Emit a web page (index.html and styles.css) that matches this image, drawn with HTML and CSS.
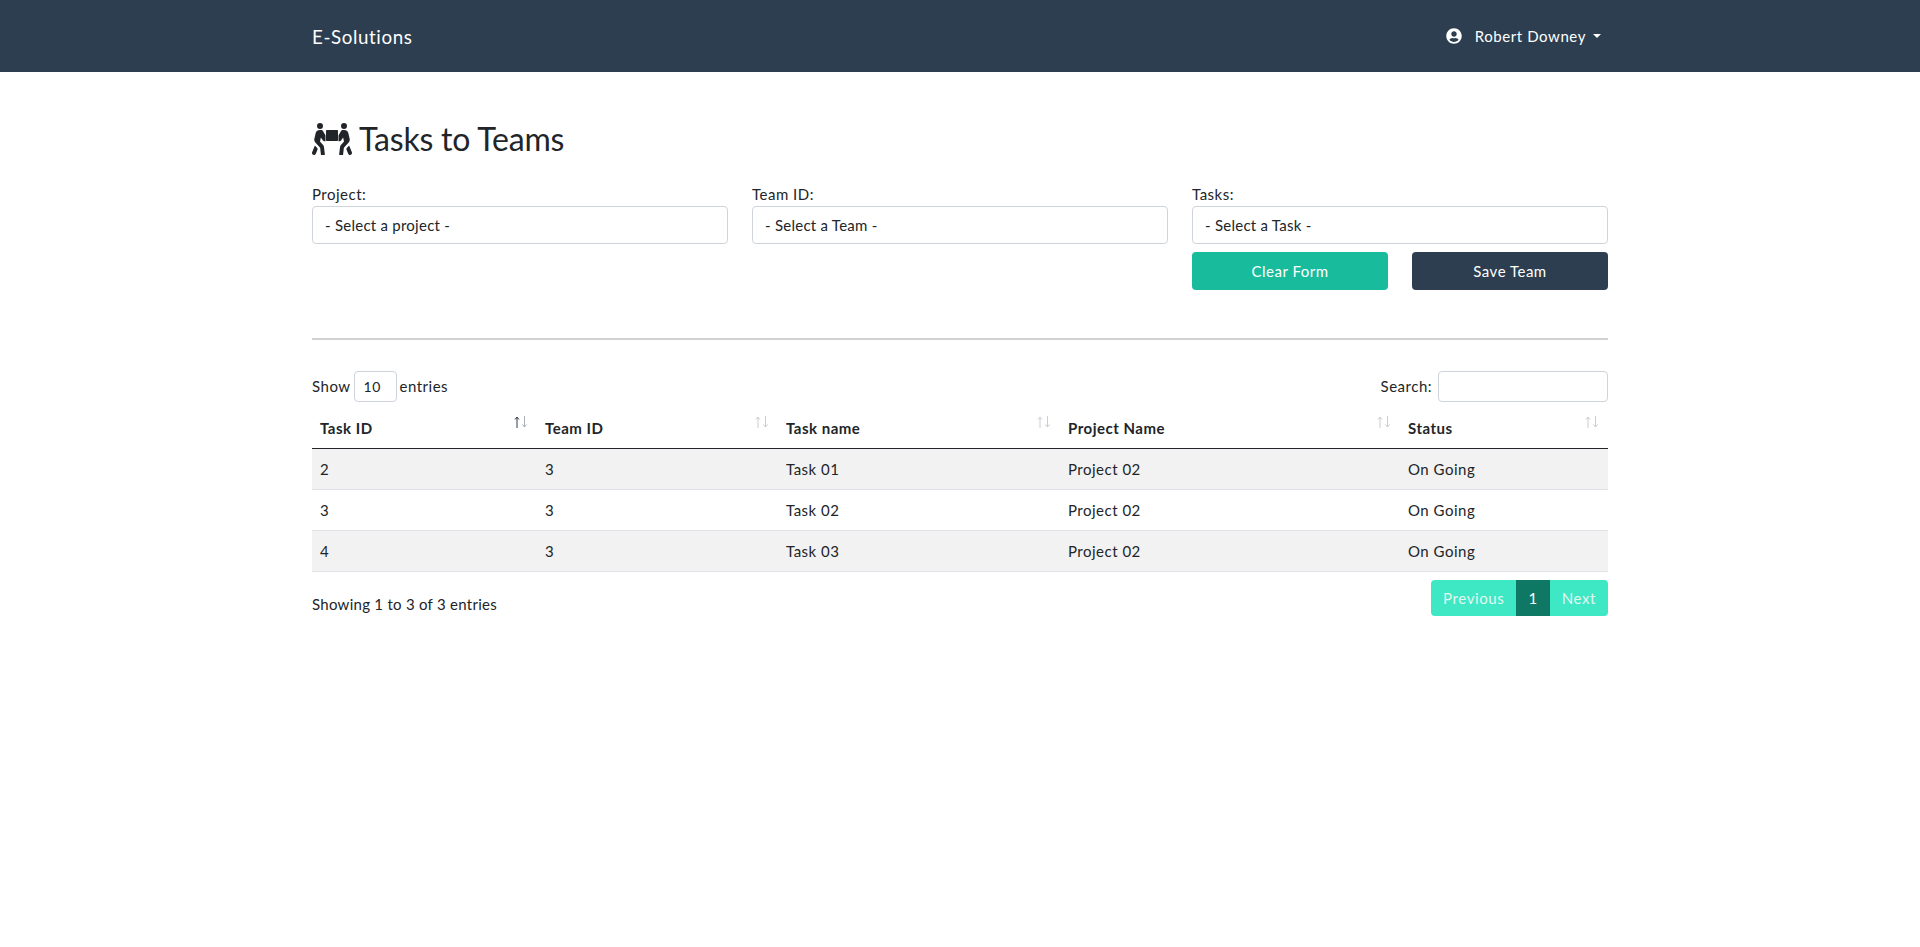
FILE: index.html
```html
<!DOCTYPE html>
<html lang="en">
<head>
<meta charset="utf-8">
<title>Tasks to Teams</title>
<link rel="stylesheet" href="styles.css">
</head>
<body>
<svg class="sprite" width="0" height="0">
  <symbol id="arrows" viewBox="0 0 14 12">
    <path class="up" d="M3 12V1M1 3.500 3 1l2 2.500"/>
    <path class="down" d="M10.500 0v11M8.500 8.500l2 2.500 2-2.500"/>
  </symbol>
</svg>
<nav class="navbar">
  <div class="container nav-inner">
    <a class="brand" href="#">E-Solutions</a>
    <a class="user" href="#">
      <svg class="user-icon" viewBox="0 0 496 512"><path fill="currentColor" d="M248 8C111 8 0 119 0 256s111 248 248 248 248-111 248-248S385 8 248 8zm0 96c48.600 0 88 39.400 88 88s-39.400 88-88 88-88-39.400-88-88 39.400-88 88-88zm0 344c-58.700 0-111.300-26.600-146.500-68.200 18.800-35.400 55.600-59.800 98.500-59.800 2.400 0 4.800.4 7.100 1.100 13 4.200 26.600 6.900 40.900 6.900 14.300 0 28-2.700 40.900-6.900 2.300-.7 4.700-1.100 7.100-1.100 42.900 0 79.700 24.400 98.500 59.800C359.300 421.400 306.700 448 248 448z"/></svg>
      <span>Robert Downey</span><i class="caret"></i>
    </a>
  </div>
</nav>
<main class="container">
  <h1 class="title">
    <svg class="carry-icon" viewBox="0 0 640 512">
      <g fill="currentColor">
        <circle cx="128" cy="48" r="48"/>
        <circle cx="512" cy="48" r="48"/>
        <rect x="224" y="112" width="192" height="176" rx="12"/>
        <path d="M96 112h48c14 0 26 8 34 20l38 66v92h-16c-12 0-22-6-28-14l-30-44-14 62 52 60c6 7 10 15 11 24l14 118c2 18-14 32-32 32-16 0-29-12-31-28l-12-104-80-90c-12-14-17-32-13-50l22-98c7-30 35-46 65-46z"/>
        <path d="M544 112h-48c-14 0-26 8-34 20l-38 66v92h16c12 0 22-6 28-14l30-44 14 62-52 60c-6 7-10 15-11 24l-14 118c-2 18 14 32 32 32 16 0 29-12 31-28l12-104 80-90c12-14 17-32 13-50l-22-98c-7-30-35-46-65-46z"/>
        <path d="M2 468l44-110 41 46 2 18-28 69c-6 15-24 24-40 18-16-7-25-25-19-41z"/>
        <path d="M638 468l-44-110-41 46-2 18 28 69c6 15 24 24 40 18 16-7 25-25 19-41z"/>
      </g>
    </svg>
    <span>Tasks to Teams</span>
  </h1>

  <form class="form-grid">
    <div class="field">
      <label>Project:</label>
      <select class="control"><option>- Select a project -</option></select>
    </div>
    <div class="field">
      <label>Team ID:</label>
      <select class="control"><option>- Select a Team -</option></select>
    </div>
    <div class="field">
      <label>Tasks:</label>
      <select class="control"><option>- Select a Task -</option></select>
      <div class="actions">
        <button type="button" class="btn btn-clear">Clear Form</button>
        <button type="button" class="btn btn-save">Save Team</button>
      </div>
    </div>
  </form>

  <hr class="divider">

  <div class="dt-top">
    <div class="dt-length">Show <span class="len-box">10</span> entries</div>
    <div class="dt-search"><label>Search:</label><input class="search-input" type="search"></div>
  </div>

  <table class="dt">
    <thead>
      <tr>
        <th class="c1"><span>Task ID</span><svg class="sort sorted"><use href="#arrows"/></svg></th>
        <th class="c2"><span>Team ID</span><svg class="sort"><use href="#arrows"/></svg></th>
        <th class="c3"><span>Task name</span><svg class="sort"><use href="#arrows"/></svg></th>
        <th class="c4"><span>Project Name</span><svg class="sort"><use href="#arrows"/></svg></th>
        <th class="c5"><span>Status</span><svg class="sort"><use href="#arrows"/></svg></th>
      </tr>
    </thead>
    <tbody>
      <tr class="odd"><td>2</td><td>3</td><td>Task 01</td><td>Project 02</td><td>On Going</td></tr>
      <tr><td>3</td><td>3</td><td>Task 02</td><td>Project 02</td><td>On Going</td></tr>
      <tr class="odd"><td>4</td><td>3</td><td>Task 03</td><td>Project 02</td><td>On Going</td></tr>
    </tbody>
  </table>

  <div class="dt-bottom">
    <div class="dt-info">Showing 1 to 3 of 3 entries</div>
    <ul class="pager">
      <li class="page">Previous</li>
      <li class="page active">1</li>
      <li class="page">Next</li>
    </ul>
  </div>
</main>
</body>
</html>
```
FILE: styles.css
```css
* { box-sizing: border-box; }
html, body { margin: 0; padding: 0; }
body {
  font-family: Lato, "Liberation Sans", sans-serif;
  font-size: 15px;
  line-height: 1.5;
  letter-spacing: .5px;
  color: #212529;
  background: #fff;
}
.sprite { display: block; height: 0; }
.container { width: 1320px; margin: 0 auto; padding: 0 12px; }
.navbar { background: #2c3e50; height: 72px; }
.nav-inner { display: flex; align-items: center; justify-content: space-between; height: 72px; }
.brand { color: #fff; font-size: 18.75px; line-height: 28px; padding-top: 2px; text-decoration: none; letter-spacing: .6px; }
.user { display: flex; align-items: center; color: #fff; text-decoration: none; padding-right: 7px; letter-spacing: .58px; }
.user-icon { width: 16px; height: 16px; margin-right: 13px; }
.caret { width: 0; height: 0; margin-left: 7px; border-top: 4.5px solid #fff; border-left: 4.5px solid transparent; border-right: 4.5px solid transparent; }
.title { display: flex; align-items: center; gap: 7px; margin: 48px 0 25px; font-size: 32px; font-weight: 400; line-height: 1.2; height: 38px; letter-spacing: -.2px; }
.carry-icon { width: 40px; height: 32px; }
.form-grid { display: grid; grid-template-columns: repeat(3, 416px); column-gap: 24px; }
.field label { display: block; height: 23px; line-height: 22px; }
.control { display: block; width: 100%; height: 38px; padding: 0 12px; font: inherit; letter-spacing: .25px; color: #212529; background: #fff; border: 1px solid #ced4da; border-radius: 4px; appearance: none; }
.actions { display: flex; justify-content: space-between; margin-top: 8px; }
.btn { width: 196px; height: 38px; border: 0; border-radius: 4px; color: #fff; font: inherit; letter-spacing: .5px; }
.btn-clear { background: #18bc9c; }
.btn-save { background: #2c3e50; }
.divider { height: 2px; border: 0; background: #d2d2d2; margin: 48px 0 30px; }
.dt-top { display: flex; justify-content: space-between; align-items: center; height: 32px; }
.dt-length { display: flex; align-items: center; gap: 3px; }
.len-box { width: 43px; height: 31px; line-height: 29px; padding-left: 9px; border: 1px solid #ced4da; border-radius: 4px; font-size: 14px; }
.dt-search { display: flex; align-items: center; gap: 6px; }
.search-input { width: 170px; height: 31px; border: 1px solid #ced4da; border-radius: 4px; padding: 0 8px; font: inherit; background: #fff; }
.dt { width: 100%; border-collapse: collapse; table-layout: fixed; margin-top: 7px; }
.c1 { width: 225px; } .c2 { width: 241px; } .c3 { width: 282px; } .c4 { width: 340px; }
.dt th { position: relative; text-align: left; font-weight: 700; height: 39px; padding: 8px; border-bottom: 1px solid #212529; }
.dt td { height: 41px; padding: 9px 8px 7px; border-bottom: 1px solid #dee2e6; }
.dt tr.odd td { background: #f2f2f2; }
.sort { --up: #c9ced3; position: absolute; right: 9px; top: 7px; width: 14px; height: 12px; fill: none; stroke-width: 1; stroke: #c9ced3; }
.sorted { --up: #2c3e50; stroke: #a9b2ba; }
.up { stroke: var(--up); }
.dt-bottom { display: flex; justify-content: space-between; align-items: flex-start; margin-top: 8px; }
.dt-info { padding-top: 13px; letter-spacing: .27px; }
.pager { display: flex; list-style: none; margin: 0; padding: 0; border-radius: 4px; overflow: hidden; background: #3ee8c5; letter-spacing: .6px; }
.page { padding: 7px 12px; height: 36px; color: #e3f7f1; line-height: 22px; }
.page.active { background: #0f7864; color: #fff; }
```
